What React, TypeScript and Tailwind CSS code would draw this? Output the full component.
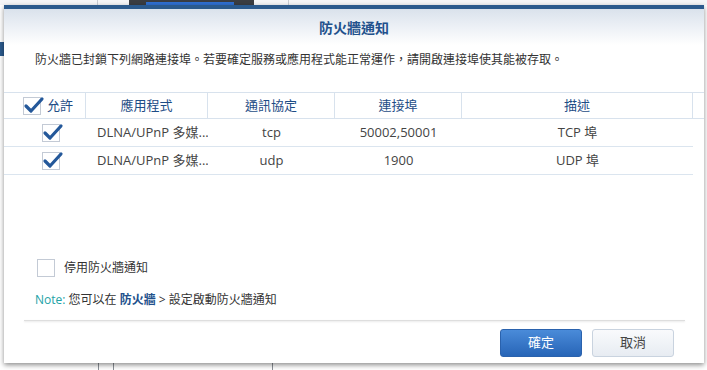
import React from "react";

const font = {
  fontFamily: '"Open Sans", "Noto Sans CJK TC", sans-serif',
};

const Check = ({ checked }: { checked: boolean }) => (
  <span className="relative block w-[18px] h-[18px] border border-[#c3cad5] bg-white shrink-0">
    {checked ? (
      <svg
        className="absolute left-[-1px] top-[-3px]"
        width="22"
        height="20"
        viewBox="0 0 22 20"
      >
        <path
          d="M3 11 L8 16 L19 4"
          fill="none"
          stroke="#24589a"
          strokeWidth="3.2"
          strokeLinecap="round"
          strokeLinejoin="round"
        />
      </svg>
    ) : null}
  </span>
);

const rows = [
  { app: "DLNA/UPnP 多媒...", proto: "tcp", port: "50002,50001", desc: "TCP 埠" },
  { app: "DLNA/UPnP 多媒...", proto: "udp", port: "1900", desc: "UDP 埠" },
];

export default function App() {
  return (
    <div
      className="relative w-[707px] h-[370px] overflow-hidden bg-white"
      style={font}
    >
      {/* desktop behind the dialog */}
      <div className="absolute left-0 top-0 w-[707px] h-[5px] bg-[#f4f5f7]" />
      <div className="absolute left-[97px] top-0 w-px h-[5px] bg-[#c8ccd2]" />
      <div className="absolute left-[129px] top-0 w-[125px] h-[5px] bg-[#3a3d42]" />
      <div className="absolute left-[146px] top-[2px] w-[88px] h-[3px] bg-[#2f6fd0]" />
      <div className="absolute left-[288px] top-0 w-px h-[5px] bg-[#c8ccd2]" />
      <div className="absolute left-0 top-[42px] w-[4px] h-[14px] bg-[#2b5a8d]" />
      <div className="absolute left-[98px] top-[360px] w-px h-[10px] bg-[#8a8f96]" />
      <div className="absolute left-[113px] top-[360px] w-px h-[10px] bg-[#8a8f96]" />
      <div className="absolute left-[272px] top-[360px] w-px h-[10px] bg-[#8a8f96]" />

      {/* dialog */}
      <div className="absolute left-[4px] top-[5px] w-[700px] h-[358px] bg-white border-t-4 border-[#2b5a8d] shadow-[0_2px_5px_rgba(0,0,0,0.45)] flex flex-col">
        <div className="h-[36px] bg-gradient-to-b from-[#dae2ec] to-white flex items-center justify-center">
          <span className="text-[14px] font-bold text-[#22518c]">防火牆通知</span>
        </div>

        <p className="mt-[6px] pl-[31px] text-[12px] leading-[18px] text-[#333]">
          防火牆已封鎖下列網路連接埠。若要確定服務或應用程式能正常運作，請開啟連接埠使其能被存取。
        </p>

        <div className="mt-[23px] text-[13px] whitespace-nowrap">
          <div className="flex h-[27px] border-y border-[#d8e2ed] text-[#1e4d86]">
            <div className="w-[82px] border-r border-[#d8e2ed] flex items-center gap-[6px] pl-[19px]">
              <Check checked />
              <span>允許</span>
            </div>
            <div className="w-[122px] border-r border-[#d8e2ed] flex items-center justify-center">
              應用程式
            </div>
            <div className="w-[127px] border-r border-[#d8e2ed] flex items-center justify-center">
              通訊協定
            </div>
            <div className="w-[127px] border-r border-[#d8e2ed] flex items-center justify-center">
              連接埠
            </div>
            <div className="w-[231px] border-r border-[#d8e2ed] flex items-center justify-center">
              描述
            </div>
            <div className="flex-1" />
          </div>
          {rows.map((r, i) => (
            <div
              key={i}
              className="flex h-[28px] w-[689px] border-b border-[#dbe5ef] text-[#444]"
            >
              <div className="w-[82px] flex items-center pl-[38px]">
                <Check checked />
              </div>
              <div className="w-[122px] flex items-center pl-[11px] overflow-hidden">{r.app}</div>
              <div className="w-[127px] flex items-center justify-center">{r.proto}</div>
              <div className="w-[127px] flex items-center justify-center">{r.port}</div>
              <div className="w-[231px] flex items-center justify-center">{r.desc}</div>
            </div>
          ))}
        </div>

        <label className="mt-[84px] ml-[33px] flex items-center gap-[9px] h-[18px] text-[12px] text-[#333]">
          <Check checked={false} />
          <span>停用防火牆通知</span>
        </label>

        <p className="mt-[14px] pl-[31px] text-[12px] leading-[18px] text-[#333]">
          <span className="text-[#22a2a6]">Note:</span> 您可以在{" "}
          <span className="font-bold text-[#22518c]">防火牆</span> &gt; 設定啟動防火牆通知
        </p>

        <div className="mt-[11px] ml-[20px] mr-[19px] h-px bg-[#dedede] shadow-[0_1px_2px_rgba(0,0,0,0.12)]" />

        <div className="mt-[8px] pr-[30px] flex justify-end gap-[10px]">
          <button className="w-[82px] h-[28px] rounded-[3px] border border-[#2a62ad] bg-gradient-to-b from-[#4a8bd9] to-[#2765b7] text-white text-[13px]">
            確定
          </button>
          <button className="w-[82px] h-[28px] rounded-[3px] border border-[#c9d3df] bg-gradient-to-b from-[#f9fafc] to-[#e7ecf2] text-[#444] text-[13px]">
            取消
          </button>
        </div>
      </div>
    </div>
  );
}
